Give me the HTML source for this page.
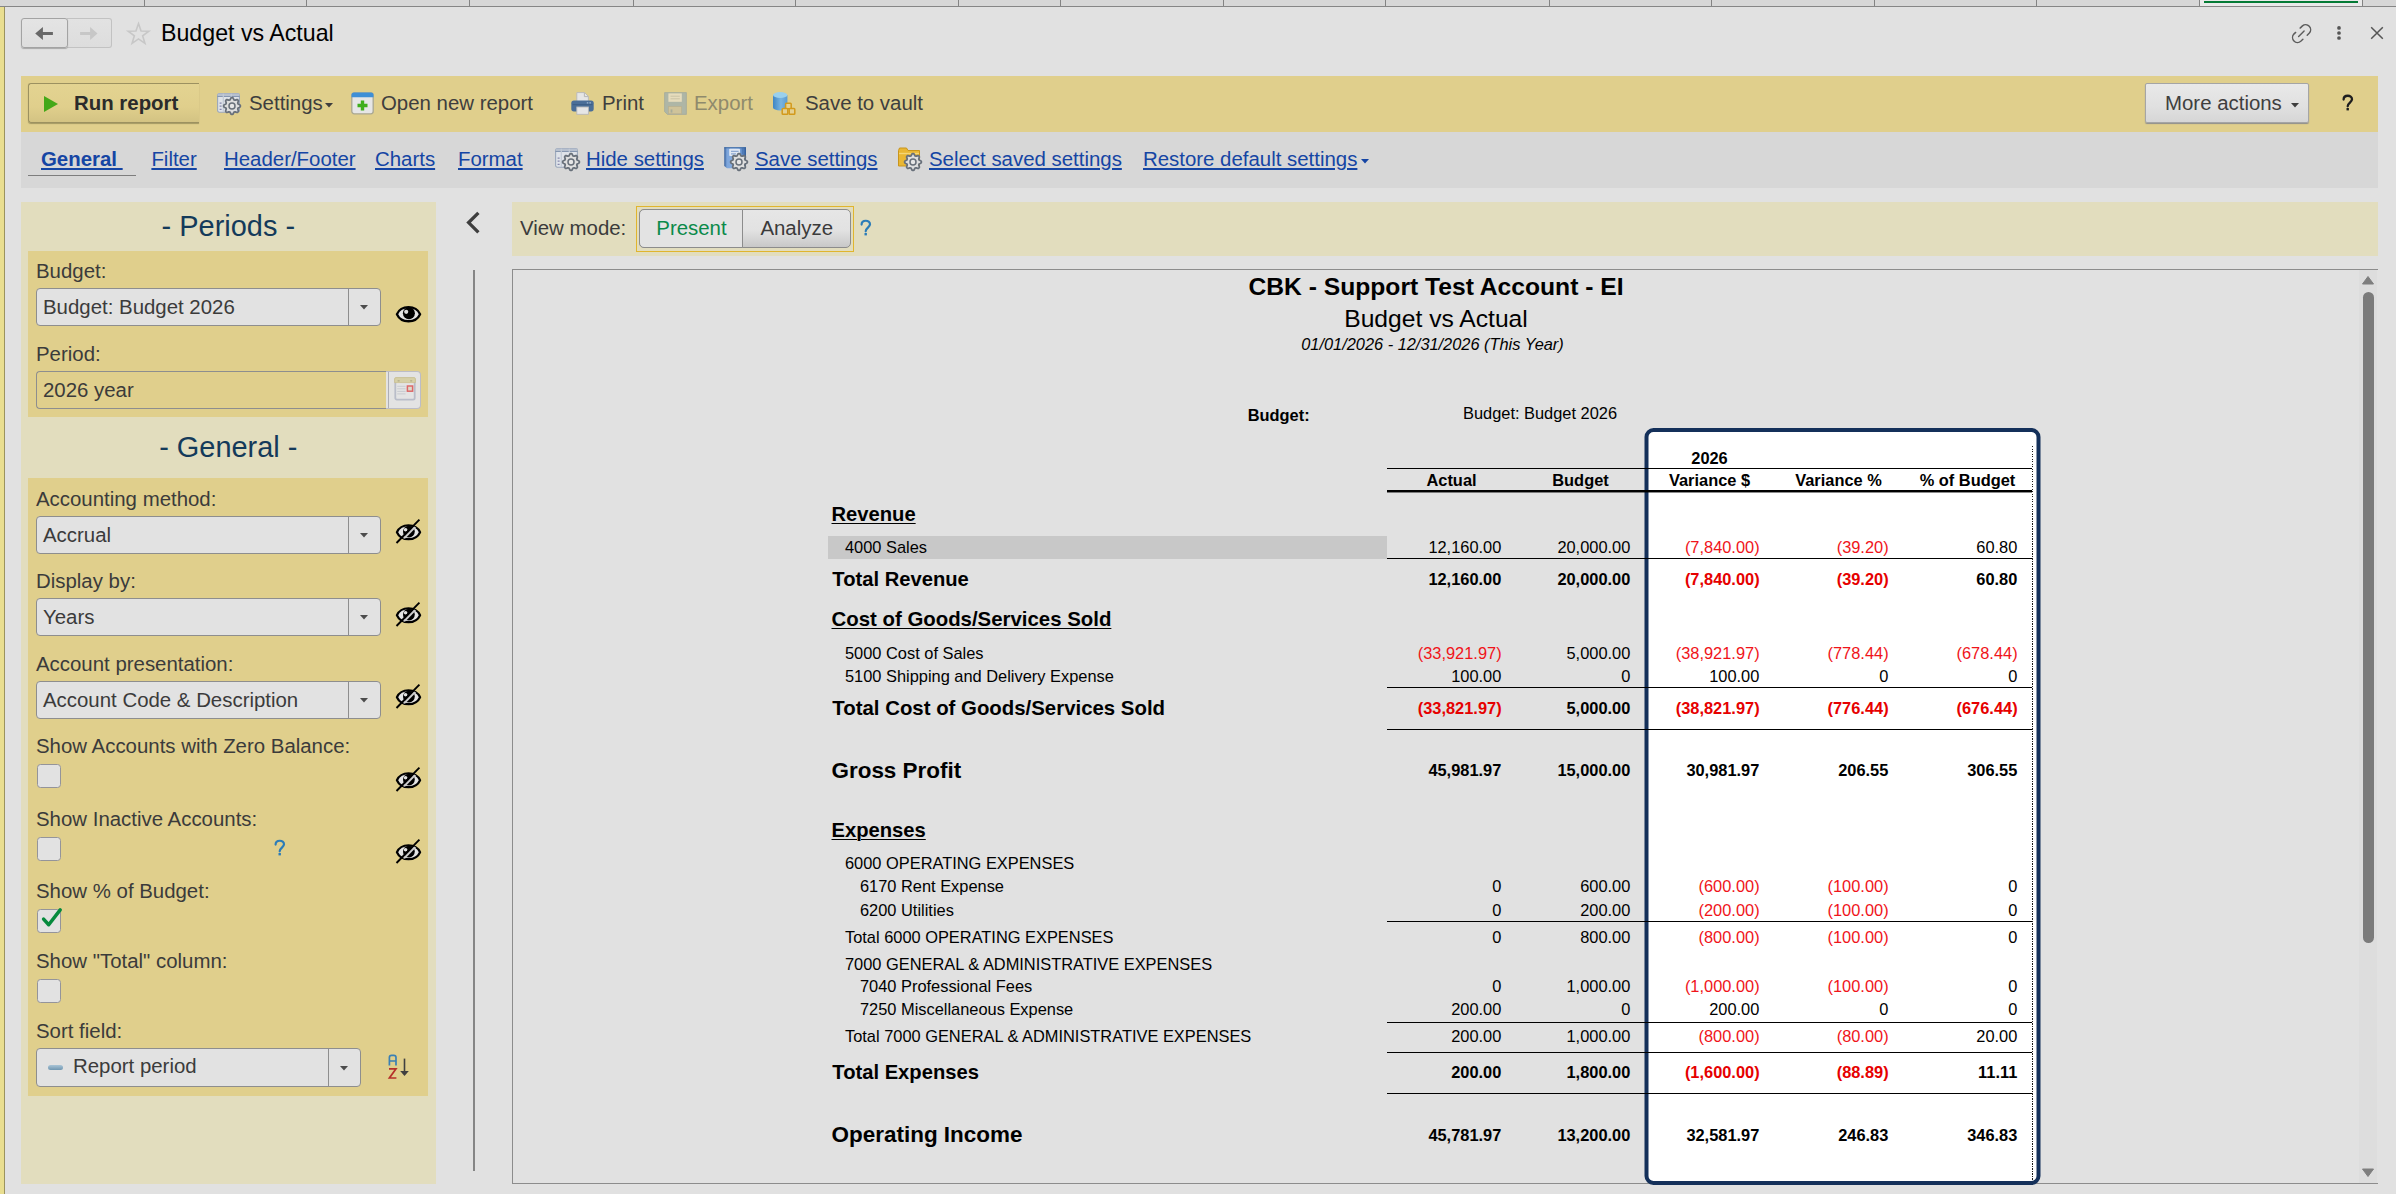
<!DOCTYPE html>
<html><head><meta charset="utf-8"><title>Budget vs Actual</title><style>
html,body{margin:0;padding:0;}
body{width:2396px;height:1194px;overflow:hidden;background:#e1e1e1;font-family:"Liberation Sans",sans-serif;position:relative;}
.r{position:absolute;box-sizing:border-box;}
.t{position:absolute;white-space:nowrap;}
svg{overflow:visible;}
</style></head><body>
<div class="r" style="left:0px;top:0px;width:2396px;height:6px;background:#d7d7d7;"></div>
<div class="r" style="left:2200px;top:0px;width:162px;height:6px;background:#e9e9e9;"></div>
<div class="r" style="left:0px;top:6px;width:2396px;height:1px;background:#868686;"></div>
<div class="r" style="left:144px;top:0px;width:1px;height:6px;background:#838383;"></div>
<div class="r" style="left:306px;top:0px;width:1px;height:6px;background:#838383;"></div>
<div class="r" style="left:469px;top:0px;width:1px;height:6px;background:#838383;"></div>
<div class="r" style="left:633px;top:0px;width:1px;height:6px;background:#838383;"></div>
<div class="r" style="left:795px;top:0px;width:1px;height:6px;background:#838383;"></div>
<div class="r" style="left:958px;top:0px;width:1px;height:6px;background:#838383;"></div>
<div class="r" style="left:1060px;top:0px;width:1px;height:6px;background:#838383;"></div>
<div class="r" style="left:1223px;top:0px;width:1px;height:6px;background:#838383;"></div>
<div class="r" style="left:1385px;top:0px;width:1px;height:6px;background:#838383;"></div>
<div class="r" style="left:1549px;top:0px;width:1px;height:6px;background:#838383;"></div>
<div class="r" style="left:1711px;top:0px;width:1px;height:6px;background:#838383;"></div>
<div class="r" style="left:1874px;top:0px;width:1px;height:6px;background:#838383;"></div>
<div class="r" style="left:2036px;top:0px;width:1px;height:6px;background:#838383;"></div>
<div class="r" style="left:2199px;top:0px;width:1px;height:6px;background:#838383;"></div>
<div class="r" style="left:2362px;top:0px;width:1px;height:6px;background:#838383;"></div>
<div class="r" style="left:2204px;top:1px;width:154px;height:2px;background:#047a35;"></div>
<div class="r" style="left:0px;top:7px;width:4px;height:1187px;background:#e9de90;"></div>
<div class="r" style="left:4px;top:7px;width:1px;height:1187px;background:#9b935e;"></div>
<div class="r" style="left:67px;top:18px;width:45px;height:30px;border:1px solid #c2c2c2;border-left:none;border-radius:0 3px 3px 0;background:linear-gradient(#e2e2e2,#dddddd);"></div>
<div class="r" style="left:21px;top:18px;width:47px;height:30px;border:1px solid #a3a3a3;border-radius:3px;background:linear-gradient(#e4e4e4,#dedede);box-shadow:0 1px 1px #a8a8a8;"></div>
<svg class="r" style="left:35px;top:26px;" width="19" height="15" viewBox="0 0 19 15"><path d="M0.2 7.5 L7.9 0.9 L7.9 6 L17.9 6 L17.9 9 L7.9 9 L7.9 14.1 Z" fill="#686868"/></svg>
<svg class="r" style="left:80px;top:26px;" width="19" height="15" viewBox="0 0 19 15"><path d="M17.5 7.5 L10.1 0.9 L10.1 6 L0.1 6 L0.1 9 L10.1 9 L10.1 14.1 Z" fill="#c7c7c7"/></svg>
<svg class="r" style="left:120px;top:15px;" width="40" height="40" viewBox="0 0 40 40"><path d="M18.50 8.60 L21.06 15.97 L28.87 16.13 L22.65 20.85 L24.91 28.32 L18.50 23.86 L12.09 28.32 L14.35 20.85 L8.13 16.13 L15.94 15.97Z" fill="none" stroke="#c7c7c7" stroke-width="1.6" stroke-linejoin="miter"/></svg>
<div class="t " style="top:19px;font-size:23.2px;line-height:28px;height:28px;color:#000;left:161px;">Budget vs Actual</div>
<svg class="r" style="left:2291.8px;top:23.9px;" width="20" height="20" viewBox="0 0 20 20"><g fill="none" stroke="#5c5c5c" stroke-width="1.45" stroke-linecap="round"><path d="M8.14 4.1 L10.45 1.9 A5 5 0 0 1 17.35 9.1 L15.2 11.2"/><path d="M3.66 8.4 L1.85 10.1 A5 5 0 0 0 8.75 17.3 L10.9 15.2"/><path d="M6.6 12.4 L12.1 7.1"/></g></svg>
<svg class="r" style="left:2336px;top:25px;" width="6" height="16" viewBox="0 0 6 16"><circle cx="3" cy="2.9" r="1.85" fill="#555"/><circle cx="3" cy="8" r="1.85" fill="#555"/><circle cx="3" cy="13" r="1.85" fill="#555"/></svg>
<svg class="r" style="left:2370px;top:26px;" width="14" height="14" viewBox="0 0 14 14"><path d="M1.2 1.2 L12.8 12.8 M12.8 1.2 L1.2 12.8" stroke="#555" stroke-width="1.5" fill="none"/></svg>
<div class="r" style="left:21px;top:76px;width:2357px;height:56px;background:#e0cf8c;"></div>
<div class="r" style="left:28px;top:83px;width:171px;height:40px;border:1px solid #9c9160;border-right:none;border-radius:3px 0 0 3px;background:linear-gradient(#e3d391,#e0cf8c 60%,#d3c383);box-shadow:0 1px 1px #a39863;"></div>
<svg class="r" style="left:44px;top:96px;" width="15" height="16" viewBox="0 0 15 16"><path d="M0 0 L14 8 L0 16 Z" fill="#44a818"/></svg>
<div class="t " style="top:91px;font-size:20.42px;line-height:24px;height:24px;color:#2b2b2b;font-weight:bold;left:74px;">Run report</div>
<div class="t " style="top:91px;font-size:20.42px;line-height:24px;height:24px;color:#3e3e3e;left:249px;">Settings</div>
<svg class="r" style="left:324.6px;top:103px;" width="8" height="5" viewBox="0 0 8 5"><path d="M0 0 L8 0 L4 4.5 Z" fill="#3e3e3e"/></svg>
<div class="t " style="top:91px;font-size:20.42px;line-height:24px;height:24px;color:#3e3e3e;left:381px;">Open new report</div>
<div class="t " style="top:91px;font-size:20.42px;line-height:24px;height:24px;color:#3e3e3e;left:602px;">Print</div>
<div class="t " style="top:91px;font-size:20.42px;line-height:24px;height:24px;color:#8f8a6c;left:694px;">Export</div>
<div class="t " style="top:91px;font-size:20.42px;line-height:24px;height:24px;color:#3e3e3e;left:805px;">Save to vault</div>
<div class="r" style="left:2145px;top:83px;width:164px;height:40px;border:1px solid #a5a5a5;border-radius:2px;background:linear-gradient(#e9e9e9,#e0e0e0 60%,#d6d6d6);box-shadow:0 1px 1px #8e8e8e;"></div>
<div class="t " style="top:91px;font-size:20.42px;line-height:24px;height:24px;color:#3e3e3e;left:2165px;">More actions</div>
<svg class="r" style="left:2291px;top:103px;" width="8" height="5" viewBox="0 0 8 5"><path d="M0 0 L8 0 L4 4.5 Z" fill="#3e3e3e"/></svg>
<svg class="r" style="left:2342px;top:94px;" width="12" height="17" viewBox="0 0 12 17"><path d="M1.6 5.6 C1.6 0.5 10 0.5 10 5.3 C10 8.3 5.7 9 5.7 12.3" fill="none" stroke="#1e1e1e" stroke-width="2.3" stroke-linecap="round"/><rect x="4.5" y="14" width="2.4" height="2.4" fill="#1e1e1e"/></svg>
<div class="r" style="left:21px;top:132px;width:2357px;height:56px;background:#d7d7d7;"></div>
<div class="t " style="top:147px;font-size:20.42px;line-height:24px;height:24px;color:#1545a4;font-weight:bold;text-decoration:underline;left:41px;white-space:pre;">General </div>
<div class="r" style="left:28px;top:175px;width:108px;height:1px;background:#7d7d7d;"></div>
<div class="t " style="top:147px;font-size:20.42px;line-height:24px;height:24px;color:#1545a4;text-decoration:underline;left:151.4px;">Filter</div>
<div class="t " style="top:147px;font-size:20.42px;line-height:24px;height:24px;color:#1545a4;text-decoration:underline;left:224px;">Header/Footer</div>
<div class="t " style="top:147px;font-size:20.42px;line-height:24px;height:24px;color:#1545a4;text-decoration:underline;left:375px;">Charts</div>
<div class="t " style="top:147px;font-size:20.42px;line-height:24px;height:24px;color:#1545a4;text-decoration:underline;left:458px;">Format</div>
<div class="t " style="top:147px;font-size:20.42px;line-height:24px;height:24px;color:#1545a4;text-decoration:underline;left:586px;">Hide settings</div>
<div class="t " style="top:147px;font-size:20.42px;line-height:24px;height:24px;color:#1545a4;text-decoration:underline;left:755px;">Save settings</div>
<div class="t " style="top:147px;font-size:20.42px;line-height:24px;height:24px;color:#1545a4;text-decoration:underline;left:929px;">Select saved settings</div>
<div class="t " style="top:147px;font-size:20.42px;line-height:24px;height:24px;color:#1545a4;text-decoration:underline;left:1143px;">Restore default settings</div>
<svg class="r" style="left:1361px;top:159px;" width="8" height="5" viewBox="0 0 8 5"><path d="M0 0 L8 0 L4 4.5 Z" fill="#1545a4"/></svg>
<div class="r" style="left:21px;top:202px;width:415px;height:982px;background:#e2ddbe;"></div>
<div class="t " style="top:209px;font-size:28.95px;line-height:34px;height:34px;color:#143a5a;left:28.30000000000001px;width:400px;text-align:center;">- Periods -</div>
<div class="r" style="left:28px;top:251px;width:400px;height:166px;background:#e0cf8c;"></div>
<div class="t " style="top:259px;font-size:20.42px;line-height:24px;height:24px;color:#3b3b3b;left:36px;">Budget:</div>
<div class="r" style="left:36px;top:288px;width:345px;height:38px;border:1px solid #8e8e8e;border-radius:4px;background:#e2e2e2;"></div>
<div class="r" style="left:348px;top:289px;width:1px;height:36px;background:#8e8e8e;"></div>
<svg class="r" style="left:360.4px;top:305.0px;" width="8" height="5" viewBox="0 0 8 5"><path d="M0 0 L8 0 L4 4.6 Z" fill="#4c4c4c"/></svg>
<div class="t " style="top:295px;font-size:20.42px;line-height:24px;height:24px;color:#3b3b3b;left:43px;">Budget: Budget 2026</div>
<div class="t " style="top:342px;font-size:20.42px;line-height:24px;height:24px;color:#3b3b3b;left:36px;">Period:</div>
<div class="r" style="left:36px;top:371px;width:351px;height:38px;border:1px solid #8e8e8e;border-right:none;border-radius:4px 0 0 4px;background:#e0cf8c;"></div>
<div class="r" style="left:386px;top:371px;width:35px;height:38px;border:1px solid #bcbcc6;border-left:none;border-radius:0 4px 4px 0;background:#e3e3e3;"></div>
<div class="r" style="left:388px;top:372px;width:1px;height:36px;background:#aeaeb6;"></div>
<div class="t " style="top:378px;font-size:20.42px;line-height:24px;height:24px;color:#3b3b3b;left:43px;">2026 year</div>
<div class="t " style="top:430px;font-size:28.95px;line-height:34px;height:34px;color:#143a5a;left:28.30000000000001px;width:400px;text-align:center;">- General -</div>
<div class="r" style="left:28px;top:478px;width:400px;height:618px;background:#e0cf8c;"></div>
<div class="t " style="top:487px;font-size:20.42px;line-height:24px;height:24px;color:#3b3b3b;left:36px;">Accounting method:</div>
<div class="r" style="left:36px;top:516px;width:345px;height:38px;border:1px solid #8e8e8e;border-radius:4px;background:#e2e2e2;"></div>
<div class="r" style="left:348px;top:517px;width:1px;height:36px;background:#8e8e8e;"></div>
<svg class="r" style="left:360.4px;top:533.0px;" width="8" height="5" viewBox="0 0 8 5"><path d="M0 0 L8 0 L4 4.6 Z" fill="#4c4c4c"/></svg>
<div class="t " style="top:523px;font-size:20.42px;line-height:24px;height:24px;color:#3b3b3b;left:43px;">Accrual</div>
<div class="t " style="top:569px;font-size:20.42px;line-height:24px;height:24px;color:#3b3b3b;left:36px;">Display by:</div>
<div class="r" style="left:36px;top:598px;width:345px;height:38px;border:1px solid #8e8e8e;border-radius:4px;background:#e2e2e2;"></div>
<div class="r" style="left:348px;top:599px;width:1px;height:36px;background:#8e8e8e;"></div>
<svg class="r" style="left:360.4px;top:615.0px;" width="8" height="5" viewBox="0 0 8 5"><path d="M0 0 L8 0 L4 4.6 Z" fill="#4c4c4c"/></svg>
<div class="t " style="top:605px;font-size:20.42px;line-height:24px;height:24px;color:#3b3b3b;left:43px;">Years</div>
<div class="t " style="top:652px;font-size:20.42px;line-height:24px;height:24px;color:#3b3b3b;left:36px;">Account presentation:</div>
<div class="r" style="left:36px;top:681px;width:345px;height:38px;border:1px solid #8e8e8e;border-radius:4px;background:#e2e2e2;"></div>
<div class="r" style="left:348px;top:682px;width:1px;height:36px;background:#8e8e8e;"></div>
<svg class="r" style="left:360.4px;top:698.0px;" width="8" height="5" viewBox="0 0 8 5"><path d="M0 0 L8 0 L4 4.6 Z" fill="#4c4c4c"/></svg>
<div class="t " style="top:688px;font-size:20.42px;line-height:24px;height:24px;color:#3b3b3b;left:43px;">Account Code &amp; Description</div>
<div class="t " style="top:734px;font-size:20.42px;line-height:24px;height:24px;color:#3b3b3b;left:36px;">Show Accounts with Zero Balance:</div>
<div class="r" style="left:37px;top:764px;width:24px;height:24px;border:1px solid #94949a;border-radius:3.5px;background:#e2e2e2;"></div>
<div class="t " style="top:807px;font-size:20.42px;line-height:24px;height:24px;color:#3b3b3b;left:36px;">Show Inactive Accounts:</div>
<div class="r" style="left:37px;top:837px;width:24px;height:24px;border:1px solid #94949a;border-radius:3.5px;background:#e2e2e2;"></div>
<svg class="r" style="left:273.5px;top:838.9px;" width="12" height="17" viewBox="0 0 12 17"><path d="M1.6 5.6 C1.6 0.5 10 0.5 10 5.3 C10 8.3 5.7 9 5.7 12.3" fill="none" stroke="#2b7cb8" stroke-width="2.2" stroke-linecap="round"/><rect x="4.5" y="14" width="2.4" height="2.4" fill="#2b7cb8"/></svg>
<div class="t " style="top:879px;font-size:20.42px;line-height:24px;height:24px;color:#3b3b3b;left:36px;">Show % of Budget:</div>
<div class="r" style="left:37px;top:909px;width:24px;height:24px;border:1px solid #94949a;border-radius:3.5px;background:#e2e2e2;"></div>
<svg class="r" style="left:40px;top:906px;" width="24" height="24" viewBox="0 0 24 24"><path d="M3.6 13.1 L8.7 18.7 L20.2 3.9" fill="none" stroke="#068a3d" stroke-width="3.5" stroke-linecap="round" stroke-linejoin="round"/></svg>
<div class="t " style="top:949px;font-size:20.42px;line-height:24px;height:24px;color:#3b3b3b;left:36px;">Show &quot;Total&quot; column:</div>
<div class="r" style="left:37px;top:979px;width:24px;height:24px;border:1px solid #94949a;border-radius:3.5px;background:#e2e2e2;"></div>
<div class="t " style="top:1019px;font-size:20.42px;line-height:24px;height:24px;color:#3b3b3b;left:36px;">Sort field:</div>
<div class="r" style="left:36px;top:1048px;width:325px;height:39px;border:1px solid #8e8e8e;border-radius:4px;background:#e2e2e2;"></div>
<div class="r" style="left:328px;top:1049px;width:1px;height:37px;background:#8e8e8e;"></div>
<svg class="r" style="left:340.4px;top:1065.5px;" width="8" height="5" viewBox="0 0 8 5"><path d="M0 0 L8 0 L4 4.6 Z" fill="#4c4c4c"/></svg>
<div class="t " style="top:1054px;font-size:20.42px;line-height:24px;height:24px;color:#3b3b3b;left:73px;">Report period</div>
<div class="r" style="left:47.5px;top:1065px;width:15px;height:5px;border-radius:2.5px;background:linear-gradient(#a9c4d6,#7096b0);"></div>
<svg class="r" style="left:465px;top:210px;" width="16" height="26" viewBox="0 0 16 26"><path d="M13.4 2.8 L3.6 12.6 L13.4 22.4" fill="none" stroke="#3e3e3e" stroke-width="3.3"/></svg>
<div class="r" style="left:473px;top:270px;width:2px;height:901px;background:#858585;"></div>
<div class="r" style="left:512px;top:202px;width:1866px;height:54px;background:#e2ddbe;"></div>
<div class="t " style="top:216px;font-size:20.42px;line-height:24px;height:24px;color:#3b3b3b;left:520px;">View mode:</div>
<div class="r" style="left:636px;top:206px;width:218px;height:46px;border:1px solid #e0b52e;"></div>
<div class="r" style="left:639px;top:209px;width:212px;height:39px;border:1px solid #8c8c8c;border-radius:5px;background:linear-gradient(#e6e6e6,#e2e2e2 55%,#c8c8c8);"></div>
<div class="r" style="left:639px;top:209px;width:104px;height:39px;border:1px solid #8c8c8c;border-radius:5px 0 0 5px;background:#e3e3e3;"></div>
<div class="t " style="top:216px;font-size:20.42px;line-height:24px;height:24px;color:#0b8a4a;left:656.3px;">Present</div>
<div class="t " style="top:216px;font-size:20.42px;line-height:24px;height:24px;color:#3b3b3b;left:760.4px;">Analyze</div>
<svg class="r" style="left:859.8px;top:219.4px;" width="12" height="17" viewBox="0 0 12 17"><path d="M1.6 5.6 C1.6 0.5 10 0.5 10 5.3 C10 8.3 5.7 9 5.7 12.3" fill="none" stroke="#2b7cb8" stroke-width="2.2" stroke-linecap="round"/><rect x="4.5" y="14" width="2.4" height="2.4" fill="#2b7cb8"/></svg>
<div class="r" style="left:512px;top:269px;width:1866px;height:915px;border:1px solid #8c8c8c;border-right:none;background:#e1e1e1;"></div>
<div class="r" style="left:2359px;top:270px;width:18px;height:913px;background:#dddddd;"></div>
<svg class="r" style="left:2362px;top:276px;" width="12" height="9" viewBox="0 0 12 9"><path d="M6 0.5 L11.5 8 L0.5 8 Z" fill="#7e7e7e" stroke="#7e7e7e" stroke-width="1" stroke-linejoin="round"/></svg>
<div class="r" style="left:2363px;top:292px;width:11px;height:651px;background:#7b7b7b;border-radius:5.5px;"></div>
<svg class="r" style="left:2362px;top:1168px;" width="12" height="9" viewBox="0 0 12 9"><path d="M6 8.5 L11.5 1 L0.5 1 Z" fill="#7e7e7e" stroke="#7e7e7e" stroke-width="1" stroke-linejoin="round"/></svg>
<div class="r" style="left:1645px;top:428px;width:396px;height:757px;border:4px solid #14305a;border-radius:9px;background:#fff;transform:translateX(-0.5px);"></div>
<div class="r" style="left:2032px;top:446px;width:1px;height:734px;background:repeating-linear-gradient(#1a1a1a 0,#1a1a1a 1.2px,transparent 1.2px,transparent 2.5px);"></div>
<div class="t " style="top:272px;font-size:24.65px;line-height:29px;height:29px;color:#000;font-weight:bold;left:1086.0px;width:700px;text-align:center;">CBK - Support Test Account - EI</div>
<div class="t " style="top:304px;font-size:24.65px;line-height:29px;height:29px;color:#000;left:1086.0px;width:700px;text-align:center;">Budget vs Actual</div>
<div class="t " style="top:334px;font-size:16.38px;line-height:20px;height:20px;color:#000;font-style:italic;left:1082.5px;width:700px;text-align:center;">01/01/2026 - 12/31/2026 (This Year)</div>
<div class="t " style="top:405px;font-size:16.4px;line-height:20px;height:20px;color:#000;font-weight:bold;left:1247.7px;">Budget:</div>
<div class="t " style="top:403px;font-size:16.4px;line-height:20px;height:20px;color:#000;left:1463px;">Budget: Budget 2026</div>
<div class="t " style="top:448px;font-size:16.4px;line-height:20px;height:20px;color:#000;font-weight:bold;left:1609.5px;width:200px;text-align:center;">2026</div>
<div class="r" style="left:1387px;top:468px;width:645px;height:1px;background:#000;"></div>
<div class="r" style="left:1387px;top:490px;width:645px;height:2px;background:#000;"></div>
<div class="r" style="left:1387px;top:492px;width:645px;height:1px;background:rgba(0,0,0,0.45);"></div>
<div class="t " style="top:470px;font-size:16.4px;line-height:20px;height:20px;color:#000;font-weight:bold;left:1387.0px;width:129px;text-align:center;">Actual</div>
<div class="t " style="top:470px;font-size:16.4px;line-height:20px;height:20px;color:#000;font-weight:bold;left:1516.0px;width:129px;text-align:center;">Budget</div>
<div class="t " style="top:470px;font-size:16.4px;line-height:20px;height:20px;color:#000;font-weight:bold;left:1645.0px;width:129px;text-align:center;">Variance $</div>
<div class="t " style="top:470px;font-size:16.4px;line-height:20px;height:20px;color:#000;font-weight:bold;left:1774.0px;width:129px;text-align:center;">Variance %</div>
<div class="t " style="top:470px;font-size:16.4px;line-height:20px;height:20px;color:#000;font-weight:bold;left:1903.0px;width:129px;text-align:center;">% of Budget</div>
<div class="t " style="top:502px;font-size:20.2px;line-height:24px;height:24px;color:#000;font-weight:bold;text-decoration:underline;left:831.5px;text-decoration-thickness:1.4px;text-underline-offset:1.7px;">Revenue</div>
<div class="r" style="left:828px;top:536px;width:559px;height:23px;background:#c8c8c8;"></div>
<div class="t " style="top:537px;font-size:16.4px;line-height:20px;height:20px;color:#000;left:845px;">4000 Sales</div>
<div class="t " style="top:537px;font-size:16.4px;line-height:20px;height:20px;color:#000;right:894.7px;text-align:right;">12,160.00</div>
<div class="t " style="top:537px;font-size:16.4px;line-height:20px;height:20px;color:#000;right:765.7px;text-align:right;">20,000.00</div>
<div class="t " style="top:537px;font-size:16.4px;line-height:20px;height:20px;color:#f0141a;right:636.4000000000001px;text-align:right;">(7,840.00)</div>
<div class="t " style="top:537px;font-size:16.4px;line-height:20px;height:20px;color:#f0141a;right:507.4000000000001px;text-align:right;">(39.20)</div>
<div class="t " style="top:537px;font-size:16.4px;line-height:20px;height:20px;color:#000;right:378.70000000000005px;text-align:right;">60.80</div>
<div class="r" style="left:1387px;top:558px;width:645px;height:1px;background:#000;"></div>
<div class="t " style="top:567px;font-size:20.2px;line-height:24px;height:24px;color:#000;font-weight:bold;left:832.3px;">Total Revenue</div>
<div class="t " style="top:569px;font-size:16.4px;line-height:20px;height:20px;color:#000;font-weight:bold;right:894.7px;text-align:right;">12,160.00</div>
<div class="t " style="top:569px;font-size:16.4px;line-height:20px;height:20px;color:#000;font-weight:bold;right:765.7px;text-align:right;">20,000.00</div>
<div class="t " style="top:569px;font-size:16.4px;line-height:20px;height:20px;color:#e60000;font-weight:bold;right:636.4000000000001px;text-align:right;">(7,840.00)</div>
<div class="t " style="top:569px;font-size:16.4px;line-height:20px;height:20px;color:#e60000;font-weight:bold;right:507.4000000000001px;text-align:right;">(39.20)</div>
<div class="t " style="top:569px;font-size:16.4px;line-height:20px;height:20px;color:#000;font-weight:bold;right:378.70000000000005px;text-align:right;">60.80</div>
<div class="t " style="top:607px;font-size:20.4px;line-height:24px;height:24px;color:#000;font-weight:bold;text-decoration:underline;left:831.5px;text-decoration-thickness:1.4px;text-underline-offset:1.7px;">Cost of Goods/Services Sold</div>
<div class="t " style="top:643px;font-size:16.4px;line-height:20px;height:20px;color:#000;left:845px;">5000 Cost of Sales</div>
<div class="t " style="top:643px;font-size:16.4px;line-height:20px;height:20px;color:#f0141a;right:894.4000000000001px;text-align:right;">(33,921.97)</div>
<div class="t " style="top:643px;font-size:16.4px;line-height:20px;height:20px;color:#000;right:765.7px;text-align:right;">5,000.00</div>
<div class="t " style="top:643px;font-size:16.4px;line-height:20px;height:20px;color:#f0141a;right:636.4000000000001px;text-align:right;">(38,921.97)</div>
<div class="t " style="top:643px;font-size:16.4px;line-height:20px;height:20px;color:#f0141a;right:507.4000000000001px;text-align:right;">(778.44)</div>
<div class="t " style="top:643px;font-size:16.4px;line-height:20px;height:20px;color:#f0141a;right:378.4000000000001px;text-align:right;">(678.44)</div>
<div class="t " style="top:666px;font-size:16.4px;line-height:20px;height:20px;color:#000;left:845px;">5100 Shipping and Delivery Expense</div>
<div class="t " style="top:666px;font-size:16.4px;line-height:20px;height:20px;color:#000;right:894.7px;text-align:right;">100.00</div>
<div class="t " style="top:666px;font-size:16.4px;line-height:20px;height:20px;color:#000;right:765.7px;text-align:right;">0</div>
<div class="t " style="top:666px;font-size:16.4px;line-height:20px;height:20px;color:#000;right:636.7px;text-align:right;">100.00</div>
<div class="t " style="top:666px;font-size:16.4px;line-height:20px;height:20px;color:#000;right:507.70000000000005px;text-align:right;">0</div>
<div class="t " style="top:666px;font-size:16.4px;line-height:20px;height:20px;color:#000;right:378.70000000000005px;text-align:right;">0</div>
<div class="r" style="left:1387px;top:687px;width:645px;height:1px;background:#000;"></div>
<div class="t " style="top:696px;font-size:20.4px;line-height:24px;height:24px;color:#000;font-weight:bold;left:832.3px;">Total Cost of Goods/Services Sold</div>
<div class="t " style="top:698px;font-size:16.4px;line-height:20px;height:20px;color:#e60000;font-weight:bold;right:894.4000000000001px;text-align:right;">(33,821.97)</div>
<div class="t " style="top:698px;font-size:16.4px;line-height:20px;height:20px;color:#000;font-weight:bold;right:765.7px;text-align:right;">5,000.00</div>
<div class="t " style="top:698px;font-size:16.4px;line-height:20px;height:20px;color:#e60000;font-weight:bold;right:636.4000000000001px;text-align:right;">(38,821.97)</div>
<div class="t " style="top:698px;font-size:16.4px;line-height:20px;height:20px;color:#e60000;font-weight:bold;right:507.4000000000001px;text-align:right;">(776.44)</div>
<div class="t " style="top:698px;font-size:16.4px;line-height:20px;height:20px;color:#e60000;font-weight:bold;right:378.4000000000001px;text-align:right;">(676.44)</div>
<div class="r" style="left:1387px;top:729px;width:645px;height:1px;background:#000;"></div>
<div class="t " style="top:757px;font-size:22.45px;line-height:27px;height:27px;color:#000;font-weight:bold;left:831.5px;">Gross Profit</div>
<div class="t " style="top:760px;font-size:16.4px;line-height:20px;height:20px;color:#000;font-weight:bold;right:894.7px;text-align:right;">45,981.97</div>
<div class="t " style="top:760px;font-size:16.4px;line-height:20px;height:20px;color:#000;font-weight:bold;right:765.7px;text-align:right;">15,000.00</div>
<div class="t " style="top:760px;font-size:16.4px;line-height:20px;height:20px;color:#000;font-weight:bold;right:636.7px;text-align:right;">30,981.97</div>
<div class="t " style="top:760px;font-size:16.4px;line-height:20px;height:20px;color:#000;font-weight:bold;right:507.70000000000005px;text-align:right;">206.55</div>
<div class="t " style="top:760px;font-size:16.4px;line-height:20px;height:20px;color:#000;font-weight:bold;right:378.70000000000005px;text-align:right;">306.55</div>
<div class="t " style="top:818px;font-size:20.2px;line-height:24px;height:24px;color:#000;font-weight:bold;text-decoration:underline;left:831.5px;text-decoration-thickness:1.4px;text-underline-offset:1.7px;">Expenses</div>
<div class="t " style="top:853px;font-size:16.4px;line-height:20px;height:20px;color:#000;left:845px;">6000 OPERATING EXPENSES</div>
<div class="t " style="top:876px;font-size:16.4px;line-height:20px;height:20px;color:#000;left:860px;">6170 Rent Expense</div>
<div class="t " style="top:876px;font-size:16.4px;line-height:20px;height:20px;color:#000;right:894.7px;text-align:right;">0</div>
<div class="t " style="top:876px;font-size:16.4px;line-height:20px;height:20px;color:#000;right:765.7px;text-align:right;">600.00</div>
<div class="t " style="top:876px;font-size:16.4px;line-height:20px;height:20px;color:#f0141a;right:636.4000000000001px;text-align:right;">(600.00)</div>
<div class="t " style="top:876px;font-size:16.4px;line-height:20px;height:20px;color:#f0141a;right:507.4000000000001px;text-align:right;">(100.00)</div>
<div class="t " style="top:876px;font-size:16.4px;line-height:20px;height:20px;color:#000;right:378.70000000000005px;text-align:right;">0</div>
<div class="t " style="top:900px;font-size:16.4px;line-height:20px;height:20px;color:#000;left:860px;">6200 Utilities</div>
<div class="t " style="top:900px;font-size:16.4px;line-height:20px;height:20px;color:#000;right:894.7px;text-align:right;">0</div>
<div class="t " style="top:900px;font-size:16.4px;line-height:20px;height:20px;color:#000;right:765.7px;text-align:right;">200.00</div>
<div class="t " style="top:900px;font-size:16.4px;line-height:20px;height:20px;color:#f0141a;right:636.4000000000001px;text-align:right;">(200.00)</div>
<div class="t " style="top:900px;font-size:16.4px;line-height:20px;height:20px;color:#f0141a;right:507.4000000000001px;text-align:right;">(100.00)</div>
<div class="t " style="top:900px;font-size:16.4px;line-height:20px;height:20px;color:#000;right:378.70000000000005px;text-align:right;">0</div>
<div class="r" style="left:1387px;top:921px;width:645px;height:1px;background:#000;"></div>
<div class="t " style="top:927px;font-size:16.4px;line-height:20px;height:20px;color:#000;left:845px;">Total 6000 OPERATING EXPENSES</div>
<div class="t " style="top:927px;font-size:16.4px;line-height:20px;height:20px;color:#000;right:894.7px;text-align:right;">0</div>
<div class="t " style="top:927px;font-size:16.4px;line-height:20px;height:20px;color:#000;right:765.7px;text-align:right;">800.00</div>
<div class="t " style="top:927px;font-size:16.4px;line-height:20px;height:20px;color:#f0141a;right:636.4000000000001px;text-align:right;">(800.00)</div>
<div class="t " style="top:927px;font-size:16.4px;line-height:20px;height:20px;color:#f0141a;right:507.4000000000001px;text-align:right;">(100.00)</div>
<div class="t " style="top:927px;font-size:16.4px;line-height:20px;height:20px;color:#000;right:378.70000000000005px;text-align:right;">0</div>
<div class="t " style="top:954px;font-size:16.4px;line-height:20px;height:20px;color:#000;left:845px;">7000 GENERAL &amp; ADMINISTRATIVE EXPENSES</div>
<div class="t " style="top:976px;font-size:16.4px;line-height:20px;height:20px;color:#000;left:860px;">7040 Professional Fees</div>
<div class="t " style="top:976px;font-size:16.4px;line-height:20px;height:20px;color:#000;right:894.7px;text-align:right;">0</div>
<div class="t " style="top:976px;font-size:16.4px;line-height:20px;height:20px;color:#000;right:765.7px;text-align:right;">1,000.00</div>
<div class="t " style="top:976px;font-size:16.4px;line-height:20px;height:20px;color:#f0141a;right:636.4000000000001px;text-align:right;">(1,000.00)</div>
<div class="t " style="top:976px;font-size:16.4px;line-height:20px;height:20px;color:#f0141a;right:507.4000000000001px;text-align:right;">(100.00)</div>
<div class="t " style="top:976px;font-size:16.4px;line-height:20px;height:20px;color:#000;right:378.70000000000005px;text-align:right;">0</div>
<div class="t " style="top:999px;font-size:16.4px;line-height:20px;height:20px;color:#000;left:860px;">7250 Miscellaneous Expense</div>
<div class="t " style="top:999px;font-size:16.4px;line-height:20px;height:20px;color:#000;right:894.7px;text-align:right;">200.00</div>
<div class="t " style="top:999px;font-size:16.4px;line-height:20px;height:20px;color:#000;right:765.7px;text-align:right;">0</div>
<div class="t " style="top:999px;font-size:16.4px;line-height:20px;height:20px;color:#000;right:636.7px;text-align:right;">200.00</div>
<div class="t " style="top:999px;font-size:16.4px;line-height:20px;height:20px;color:#000;right:507.70000000000005px;text-align:right;">0</div>
<div class="t " style="top:999px;font-size:16.4px;line-height:20px;height:20px;color:#000;right:378.70000000000005px;text-align:right;">0</div>
<div class="r" style="left:1387px;top:1022px;width:645px;height:1px;background:#000;"></div>
<div class="t " style="top:1026px;font-size:16.4px;line-height:20px;height:20px;color:#000;left:845px;">Total 7000 GENERAL &amp; ADMINISTRATIVE EXPENSES</div>
<div class="t " style="top:1026px;font-size:16.4px;line-height:20px;height:20px;color:#000;right:894.7px;text-align:right;">200.00</div>
<div class="t " style="top:1026px;font-size:16.4px;line-height:20px;height:20px;color:#000;right:765.7px;text-align:right;">1,000.00</div>
<div class="t " style="top:1026px;font-size:16.4px;line-height:20px;height:20px;color:#f0141a;right:636.4000000000001px;text-align:right;">(800.00)</div>
<div class="t " style="top:1026px;font-size:16.4px;line-height:20px;height:20px;color:#f0141a;right:507.4000000000001px;text-align:right;">(80.00)</div>
<div class="t " style="top:1026px;font-size:16.4px;line-height:20px;height:20px;color:#000;right:378.70000000000005px;text-align:right;">20.00</div>
<div class="r" style="left:1387px;top:1052px;width:645px;height:1px;background:#000;"></div>
<div class="t " style="top:1060px;font-size:20.2px;line-height:24px;height:24px;color:#000;font-weight:bold;left:832.3px;">Total Expenses</div>
<div class="t " style="top:1062px;font-size:16.4px;line-height:20px;height:20px;color:#000;font-weight:bold;right:894.7px;text-align:right;">200.00</div>
<div class="t " style="top:1062px;font-size:16.4px;line-height:20px;height:20px;color:#000;font-weight:bold;right:765.7px;text-align:right;">1,800.00</div>
<div class="t " style="top:1062px;font-size:16.4px;line-height:20px;height:20px;color:#e60000;font-weight:bold;right:636.4000000000001px;text-align:right;">(1,600.00)</div>
<div class="t " style="top:1062px;font-size:16.4px;line-height:20px;height:20px;color:#e60000;font-weight:bold;right:507.4000000000001px;text-align:right;">(88.89)</div>
<div class="t " style="top:1062px;font-size:16.4px;line-height:20px;height:20px;color:#000;font-weight:bold;right:378.70000000000005px;text-align:right;">11.11</div>
<div class="r" style="left:1387px;top:1093px;width:645px;height:1px;background:#000;"></div>
<div class="t " style="top:1121px;font-size:22.47px;line-height:27px;height:27px;color:#000;font-weight:bold;left:831.5px;">Operating Income</div>
<div class="t " style="top:1125px;font-size:16.4px;line-height:20px;height:20px;color:#000;font-weight:bold;right:894.7px;text-align:right;">45,781.97</div>
<div class="t " style="top:1125px;font-size:16.4px;line-height:20px;height:20px;color:#000;font-weight:bold;right:765.7px;text-align:right;">13,200.00</div>
<div class="t " style="top:1125px;font-size:16.4px;line-height:20px;height:20px;color:#000;font-weight:bold;right:636.7px;text-align:right;">32,581.97</div>
<div class="t " style="top:1125px;font-size:16.4px;line-height:20px;height:20px;color:#000;font-weight:bold;right:507.70000000000005px;text-align:right;">246.83</div>
<div class="t " style="top:1125px;font-size:16.4px;line-height:20px;height:20px;color:#000;font-weight:bold;right:378.70000000000005px;text-align:right;">346.83</div>
<svg class="r" style="left:217px;top:92.5px;" width="23" height="20" viewBox="0 0 23 20"><rect x="0.6" y="0.6" width="21.8" height="18.6" rx="1.6" fill="#dfe3e9" stroke="#9aa7ba" stroke-width="1.1"/><rect x="0.6" y="0.6" width="21.8" height="2.6" rx="1.3" fill="#b7c0ce"/><path d="M0.6 3.5 H22.4" stroke="#7285a3" stroke-width="0.8"/><path d="M6.3 0.8 V19 M14.3 0.8 V4.5" stroke="#c3cad6" stroke-width="1.2"/><path d="M2.6 10.2 H4.6 M2.6 13.2 H4.6 M2.6 16.4 H4.6" stroke="#8688ac" stroke-width="1.3"/></svg>
<svg class="r" style="left:219.89999999999998px;top:93.9px;" width="24" height="24" viewBox="0 0 24 24"><path d="M12.00 3.65 L12.55 3.67 L13.05 4.03 L13.44 4.74 L13.75 5.47 L14.07 5.89 L14.47 6.04 L14.85 6.22 L15.38 6.15 L16.11 5.85 L16.90 5.62 L17.51 5.72 L17.90 6.10 L18.28 6.49 L18.38 7.10 L18.15 7.89 L17.85 8.62 L17.78 9.15 L17.96 9.53 L18.11 9.93 L18.53 10.25 L19.26 10.56 L19.97 10.95 L20.33 11.45 L20.35 12.00 L20.33 12.55 L19.97 13.05 L19.26 13.44 L18.53 13.75 L18.11 14.07 L17.96 14.47 L17.78 14.85 L17.85 15.38 L18.15 16.11 L18.38 16.90 L18.28 17.51 L17.90 17.90 L17.51 18.28 L16.90 18.38 L16.11 18.15 L15.38 17.85 L14.85 17.78 L14.47 17.96 L14.07 18.11 L13.75 18.53 L13.44 19.26 L13.05 19.97 L12.55 20.33 L12.00 20.35 L11.45 20.33 L10.95 19.97 L10.56 19.26 L10.25 18.53 L9.93 18.11 L9.53 17.96 L9.15 17.78 L8.62 17.85 L7.89 18.15 L7.10 18.38 L6.49 18.28 L6.10 17.90 L5.72 17.51 L5.62 16.90 L5.85 16.11 L6.15 15.38 L6.22 14.85 L6.04 14.47 L5.89 14.07 L5.47 13.75 L4.74 13.44 L4.03 13.05 L3.67 12.55 L3.65 12.00 L3.67 11.45 L4.03 10.95 L4.74 10.56 L5.47 10.25 L5.89 9.93 L6.04 9.53 L6.22 9.15 L6.15 8.62 L5.85 7.89 L5.62 7.10 L5.72 6.49 L6.10 6.10 L6.49 5.72 L7.10 5.62 L7.89 5.85 L8.62 6.15 L9.15 6.22 L9.53 6.04 L9.93 5.89 L10.25 5.47 L10.56 4.74 L10.95 4.03 L11.45 3.67Z" fill="#dedede" stroke="#68707a" stroke-width="1.75" stroke-linejoin="round"/><circle cx="12" cy="12" r="3.0" fill="#e6e6e6" stroke="#68707a" stroke-width="1.5"/></svg>
<svg class="r" style="left:351px;top:92px;" width="23" height="23" viewBox="0 0 23 23"><rect x="0.8" y="0.8" width="21.4" height="21" rx="2.5" fill="#e6e6e6" stroke="#a9a792" stroke-width="1.3"/><path d="M0.5 5.3 V3 A2.5 2.5 0 0 1 3 0.5 H20 A2.5 2.5 0 0 1 22.5 3 V5.3 Z" fill="#3e8fd6"/><path d="M11.5 8.5 V18.5 M6.5 13.5 H16.5" stroke="#3fae1c" stroke-width="3.4" fill="none"/></svg>
<svg class="r" style="left:571px;top:92px;" width="23" height="23" viewBox="0 0 23 23"><path d="M5.8 0.6 H13.6 L17.4 4.4 V10 H5.8 Z" fill="#e6e6e6" stroke="#b8b8b8" stroke-width="0.9"/><path d="M13.4 0.8 V4.6 H17.2" fill="none" stroke="#b0b0b0" stroke-width="0.9"/><rect x="0.3" y="8.6" width="22.4" height="10.8" rx="2.6" fill="#4a6e98"/><rect x="1.5" y="12" width="20" height="1.2" fill="#3d5f88"/><rect x="15.8" y="10.2" width="1.5" height="1.3" fill="#9db6d2"/><rect x="18.4" y="10.2" width="1.5" height="1.3" fill="#9db6d2"/><rect x="5.8" y="15" width="11.6" height="7.3" fill="#e6e6e6" stroke="#b8b8b8" stroke-width="0.9"/></svg>
<svg class="r" style="left:664px;top:92px;" width="23" height="23" viewBox="0 0 23 23"><path d="M0.6 0.6 H22.4 V22.4 H3.4 L0.6 19.6 Z" fill="#aeb6a6" stroke="#a4ab9a" stroke-width="0.8"/><rect x="4.4" y="1.4" width="13.4" height="8.4" fill="#e6dcbc"/><path d="M6.5 4.2 H15.8 M6.5 6.8 H15.8" stroke="#c9c2a4" stroke-width="1"/><rect x="4.6" y="14.6" width="13" height="7.2" fill="#cfc39a" stroke="#b9b08e" stroke-width="0.7"/><rect x="6.6" y="17.4" width="1.8" height="3.2" fill="#a8ac9a"/></svg>
<svg class="r" style="left:772px;top:91px;" width="26" height="25" viewBox="0 0 26 25"><defs><linearGradient id="cyl" x1="0" x2="1" y1="0" y2="0"><stop offset="0" stop-color="#3f86c4"/><stop offset="0.55" stop-color="#78b4e0"/><stop offset="1" stop-color="#5a9bd2"/></linearGradient></defs><path d="M1 4 V16.5 A7.2 3 0 0 0 15.4 16.5 V4 Z" fill="url(#cyl)"/><ellipse cx="8.2" cy="4" rx="7.2" ry="3" fill="#9ad0ec"/><g fill="#e5d192" stroke="#d29a1c" stroke-width="1.5"><rect x="13.6" y="12.2" width="5.6" height="5.6" rx="0.8"/><rect x="10.2" y="17.6" width="5.6" height="5.6" rx="0.8"/><rect x="17.2" y="17.6" width="5.6" height="5.6" rx="0.8"/></g></svg>
<svg class="r" style="left:555px;top:148px;" width="23" height="20" viewBox="0 0 23 20"><rect x="0.6" y="0.6" width="21.8" height="18.6" rx="1.6" fill="#dfe3e9" stroke="#9aa7ba" stroke-width="1.1"/><rect x="0.6" y="0.6" width="21.8" height="2.6" rx="1.3" fill="#b7c0ce"/><path d="M0.6 3.5 H22.4" stroke="#7285a3" stroke-width="0.8"/><path d="M6.3 0.8 V19 M14.3 0.8 V4.5" stroke="#c3cad6" stroke-width="1.2"/><path d="M2.6 10.2 H4.6 M2.6 13.2 H4.6 M2.6 16.4 H4.6" stroke="#8688ac" stroke-width="1.3"/></svg>
<svg class="r" style="left:558.6px;top:150.2px;" width="24" height="24" viewBox="0 0 24 24"><path d="M12.00 3.65 L12.55 3.67 L13.05 4.03 L13.44 4.74 L13.75 5.47 L14.07 5.89 L14.47 6.04 L14.85 6.22 L15.38 6.15 L16.11 5.85 L16.90 5.62 L17.51 5.72 L17.90 6.10 L18.28 6.49 L18.38 7.10 L18.15 7.89 L17.85 8.62 L17.78 9.15 L17.96 9.53 L18.11 9.93 L18.53 10.25 L19.26 10.56 L19.97 10.95 L20.33 11.45 L20.35 12.00 L20.33 12.55 L19.97 13.05 L19.26 13.44 L18.53 13.75 L18.11 14.07 L17.96 14.47 L17.78 14.85 L17.85 15.38 L18.15 16.11 L18.38 16.90 L18.28 17.51 L17.90 17.90 L17.51 18.28 L16.90 18.38 L16.11 18.15 L15.38 17.85 L14.85 17.78 L14.47 17.96 L14.07 18.11 L13.75 18.53 L13.44 19.26 L13.05 19.97 L12.55 20.33 L12.00 20.35 L11.45 20.33 L10.95 19.97 L10.56 19.26 L10.25 18.53 L9.93 18.11 L9.53 17.96 L9.15 17.78 L8.62 17.85 L7.89 18.15 L7.10 18.38 L6.49 18.28 L6.10 17.90 L5.72 17.51 L5.62 16.90 L5.85 16.11 L6.15 15.38 L6.22 14.85 L6.04 14.47 L5.89 14.07 L5.47 13.75 L4.74 13.44 L4.03 13.05 L3.67 12.55 L3.65 12.00 L3.67 11.45 L4.03 10.95 L4.74 10.56 L5.47 10.25 L5.89 9.93 L6.04 9.53 L6.22 9.15 L6.15 8.62 L5.85 7.89 L5.62 7.10 L5.72 6.49 L6.10 6.10 L6.49 5.72 L7.10 5.62 L7.89 5.85 L8.62 6.15 L9.15 6.22 L9.53 6.04 L9.93 5.89 L10.25 5.47 L10.56 4.74 L10.95 4.03 L11.45 3.67Z" fill="#dedede" stroke="#68707a" stroke-width="1.75" stroke-linejoin="round"/><circle cx="12" cy="12" r="3.0" fill="#e6e6e6" stroke="#68707a" stroke-width="1.5"/></svg>
<svg class="r" style="left:724px;top:147px;" width="22" height="22" viewBox="0 0 22 22"><defs><linearGradient id="flp" x1="0" x2="1" y1="0" y2="0"><stop offset="0" stop-color="#2f5a98"/><stop offset="0.12" stop-color="#7ea6db"/><stop offset="0.45" stop-color="#86ace0"/><stop offset="0.8" stop-color="#6f9ad4"/><stop offset="1" stop-color="#2f5a98"/></linearGradient></defs><path d="M0.3 0.3 H22 V21.3 H3 L0.3 19 Z" fill="url(#flp)"/><path d="M0.3 0.8 H22" stroke="#3a659f" stroke-width="1"/><rect x="5.2" y="1.8" width="10.8" height="7.2" rx="0.8" fill="#dfe7f3"/><path d="M7 4.3 H14.6 M7 6.9 H12" stroke="#8ea9d2" stroke-width="1.3"/><rect x="17.6" y="1.2" width="1.6" height="6" fill="#3e67a6" opacity="0.5"/></svg>
<svg class="r" style="left:727.2px;top:150.2px;" width="24" height="24" viewBox="0 0 24 24"><path d="M12.00 3.65 L12.55 3.67 L13.05 4.03 L13.44 4.74 L13.75 5.47 L14.07 5.89 L14.47 6.04 L14.85 6.22 L15.38 6.15 L16.11 5.85 L16.90 5.62 L17.51 5.72 L17.90 6.10 L18.28 6.49 L18.38 7.10 L18.15 7.89 L17.85 8.62 L17.78 9.15 L17.96 9.53 L18.11 9.93 L18.53 10.25 L19.26 10.56 L19.97 10.95 L20.33 11.45 L20.35 12.00 L20.33 12.55 L19.97 13.05 L19.26 13.44 L18.53 13.75 L18.11 14.07 L17.96 14.47 L17.78 14.85 L17.85 15.38 L18.15 16.11 L18.38 16.90 L18.28 17.51 L17.90 17.90 L17.51 18.28 L16.90 18.38 L16.11 18.15 L15.38 17.85 L14.85 17.78 L14.47 17.96 L14.07 18.11 L13.75 18.53 L13.44 19.26 L13.05 19.97 L12.55 20.33 L12.00 20.35 L11.45 20.33 L10.95 19.97 L10.56 19.26 L10.25 18.53 L9.93 18.11 L9.53 17.96 L9.15 17.78 L8.62 17.85 L7.89 18.15 L7.10 18.38 L6.49 18.28 L6.10 17.90 L5.72 17.51 L5.62 16.90 L5.85 16.11 L6.15 15.38 L6.22 14.85 L6.04 14.47 L5.89 14.07 L5.47 13.75 L4.74 13.44 L4.03 13.05 L3.67 12.55 L3.65 12.00 L3.67 11.45 L4.03 10.95 L4.74 10.56 L5.47 10.25 L5.89 9.93 L6.04 9.53 L6.22 9.15 L6.15 8.62 L5.85 7.89 L5.62 7.10 L5.72 6.49 L6.10 6.10 L6.49 5.72 L7.10 5.62 L7.89 5.85 L8.62 6.15 L9.15 6.22 L9.53 6.04 L9.93 5.89 L10.25 5.47 L10.56 4.74 L10.95 4.03 L11.45 3.67Z" fill="#dedede" stroke="#68707a" stroke-width="1.75" stroke-linejoin="round"/><circle cx="12" cy="12" r="3.0" fill="#e6e6e6" stroke="#68707a" stroke-width="1.5"/></svg>
<svg class="r" style="left:898px;top:147px;" width="22" height="20" viewBox="0 0 22 20"><path d="M0.5 3.5 L1.5 1 H8.5 L10 3.5 H21.5 V19 H0.5 Z" fill="#e9b734" stroke="#c9951c" stroke-width="1"/><path d="M1 6.5 H21" stroke="#f4d678" stroke-width="1.4"/></svg>
<svg class="r" style="left:901.3000000000001px;top:150.2px;" width="24" height="24" viewBox="0 0 24 24"><path d="M12.00 3.65 L12.55 3.67 L13.05 4.03 L13.44 4.74 L13.75 5.47 L14.07 5.89 L14.47 6.04 L14.85 6.22 L15.38 6.15 L16.11 5.85 L16.90 5.62 L17.51 5.72 L17.90 6.10 L18.28 6.49 L18.38 7.10 L18.15 7.89 L17.85 8.62 L17.78 9.15 L17.96 9.53 L18.11 9.93 L18.53 10.25 L19.26 10.56 L19.97 10.95 L20.33 11.45 L20.35 12.00 L20.33 12.55 L19.97 13.05 L19.26 13.44 L18.53 13.75 L18.11 14.07 L17.96 14.47 L17.78 14.85 L17.85 15.38 L18.15 16.11 L18.38 16.90 L18.28 17.51 L17.90 17.90 L17.51 18.28 L16.90 18.38 L16.11 18.15 L15.38 17.85 L14.85 17.78 L14.47 17.96 L14.07 18.11 L13.75 18.53 L13.44 19.26 L13.05 19.97 L12.55 20.33 L12.00 20.35 L11.45 20.33 L10.95 19.97 L10.56 19.26 L10.25 18.53 L9.93 18.11 L9.53 17.96 L9.15 17.78 L8.62 17.85 L7.89 18.15 L7.10 18.38 L6.49 18.28 L6.10 17.90 L5.72 17.51 L5.62 16.90 L5.85 16.11 L6.15 15.38 L6.22 14.85 L6.04 14.47 L5.89 14.07 L5.47 13.75 L4.74 13.44 L4.03 13.05 L3.67 12.55 L3.65 12.00 L3.67 11.45 L4.03 10.95 L4.74 10.56 L5.47 10.25 L5.89 9.93 L6.04 9.53 L6.22 9.15 L6.15 8.62 L5.85 7.89 L5.62 7.10 L5.72 6.49 L6.10 6.10 L6.49 5.72 L7.10 5.62 L7.89 5.85 L8.62 6.15 L9.15 6.22 L9.53 6.04 L9.93 5.89 L10.25 5.47 L10.56 4.74 L10.95 4.03 L11.45 3.67Z" fill="#dedede" stroke="#68707a" stroke-width="1.75" stroke-linejoin="round"/><circle cx="12" cy="12" r="3.0" fill="#e6e6e6" stroke="#68707a" stroke-width="1.5"/></svg>
<svg class="r" style="left:396.0px;top:306.2px;" width="25" height="17" viewBox="0 0 25 17"><path d="M0.9 8.2 C 5.2 -1.2, 19.8 -1.2, 24.1 8.2 C 19.8 17.6, 5.2 17.6, 0.9 8.2 Z" fill="#e4e4e4" stroke="#000" stroke-width="2.3" stroke-linejoin="round"/><circle cx="12.9" cy="7.3" r="6.0" fill="#000"/><circle cx="10.2" cy="5.8" r="2.1" fill="#dcdcdc"/></svg>
<svg class="r" style="left:396.0px;top:519.0px;" width="25" height="25" viewBox="0 0 25 25"><clipPath id="ec1"><path d="M0.9 13.2 C 5.2 3.9, 19.8 3.9, 24.1 13.2 C 19.8 22.5, 5.2 22.5, 0.9 13.2 Z"/></clipPath><path d="M0.9 13.2 C 5.2 3.9, 19.8 3.9, 24.1 13.2 C 19.8 22.5, 5.2 22.5, 0.9 13.2 Z" fill="#e4e4e4" stroke="#000" stroke-width="2.2" stroke-linejoin="round"/><circle cx="12.9" cy="12.6" r="5.9" fill="#000"/><circle cx="9.6" cy="10.7" r="1.8" fill="#e0e0e0"/><path d="M2.2 25.2 L25.2 1.7" stroke="#cdcdcd" stroke-width="2.1" clip-path="url(#ec1)"/><path d="M0.5 24.0 L23.4 0.6" stroke="#000" stroke-width="1.9" stroke-linecap="butt"/></svg>
<svg class="r" style="left:396.0px;top:601.9px;" width="25" height="25" viewBox="0 0 25 25"><clipPath id="ec2"><path d="M0.9 13.2 C 5.2 3.9, 19.8 3.9, 24.1 13.2 C 19.8 22.5, 5.2 22.5, 0.9 13.2 Z"/></clipPath><path d="M0.9 13.2 C 5.2 3.9, 19.8 3.9, 24.1 13.2 C 19.8 22.5, 5.2 22.5, 0.9 13.2 Z" fill="#e4e4e4" stroke="#000" stroke-width="2.2" stroke-linejoin="round"/><circle cx="12.9" cy="12.6" r="5.9" fill="#000"/><circle cx="9.6" cy="10.7" r="1.8" fill="#e0e0e0"/><path d="M2.2 25.2 L25.2 1.7" stroke="#cdcdcd" stroke-width="2.1" clip-path="url(#ec2)"/><path d="M0.5 24.0 L23.4 0.6" stroke="#000" stroke-width="1.9" stroke-linecap="butt"/></svg>
<svg class="r" style="left:396.0px;top:683.5px;" width="25" height="25" viewBox="0 0 25 25"><clipPath id="ec3"><path d="M0.9 13.2 C 5.2 3.9, 19.8 3.9, 24.1 13.2 C 19.8 22.5, 5.2 22.5, 0.9 13.2 Z"/></clipPath><path d="M0.9 13.2 C 5.2 3.9, 19.8 3.9, 24.1 13.2 C 19.8 22.5, 5.2 22.5, 0.9 13.2 Z" fill="#e4e4e4" stroke="#000" stroke-width="2.2" stroke-linejoin="round"/><circle cx="12.9" cy="12.6" r="5.9" fill="#000"/><circle cx="9.6" cy="10.7" r="1.8" fill="#e0e0e0"/><path d="M2.2 25.2 L25.2 1.7" stroke="#cdcdcd" stroke-width="2.1" clip-path="url(#ec3)"/><path d="M0.5 24.0 L23.4 0.6" stroke="#000" stroke-width="1.9" stroke-linecap="butt"/></svg>
<svg class="r" style="left:396.0px;top:767.0999999999999px;" width="25" height="25" viewBox="0 0 25 25"><clipPath id="ec4"><path d="M0.9 13.2 C 5.2 3.9, 19.8 3.9, 24.1 13.2 C 19.8 22.5, 5.2 22.5, 0.9 13.2 Z"/></clipPath><path d="M0.9 13.2 C 5.2 3.9, 19.8 3.9, 24.1 13.2 C 19.8 22.5, 5.2 22.5, 0.9 13.2 Z" fill="#e4e4e4" stroke="#000" stroke-width="2.2" stroke-linejoin="round"/><circle cx="12.9" cy="12.6" r="5.9" fill="#000"/><circle cx="9.6" cy="10.7" r="1.8" fill="#e0e0e0"/><path d="M2.2 25.2 L25.2 1.7" stroke="#cdcdcd" stroke-width="2.1" clip-path="url(#ec4)"/><path d="M0.5 24.0 L23.4 0.6" stroke="#000" stroke-width="1.9" stroke-linecap="butt"/></svg>
<svg class="r" style="left:396.0px;top:838.9px;" width="25" height="25" viewBox="0 0 25 25"><clipPath id="ec5"><path d="M0.9 13.2 C 5.2 3.9, 19.8 3.9, 24.1 13.2 C 19.8 22.5, 5.2 22.5, 0.9 13.2 Z"/></clipPath><path d="M0.9 13.2 C 5.2 3.9, 19.8 3.9, 24.1 13.2 C 19.8 22.5, 5.2 22.5, 0.9 13.2 Z" fill="#e4e4e4" stroke="#000" stroke-width="2.2" stroke-linejoin="round"/><circle cx="12.9" cy="12.6" r="5.9" fill="#000"/><circle cx="9.6" cy="10.7" r="1.8" fill="#e0e0e0"/><path d="M2.2 25.2 L25.2 1.7" stroke="#cdcdcd" stroke-width="2.1" clip-path="url(#ec5)"/><path d="M0.5 24.0 L23.4 0.6" stroke="#000" stroke-width="1.9" stroke-linecap="butt"/></svg>
<svg class="r" style="left:394px;top:377px;" width="22" height="24" viewBox="0 0 22 24"><rect x="1.3" y="1.3" width="19.4" height="21.4" rx="1.6" fill="#e4e4e4" stroke="#b9bdc9" stroke-width="1.8"/><path d="M0.6 5.6 V2 A1.4 1.4 0 0 1 2 0.6 H20 A1.4 1.4 0 0 1 21.4 2 V5.6 Z" fill="#d6d0a6" stroke="#c9bf8e" stroke-width="0.8"/><rect x="3.6" y="3" width="2" height="1.6" fill="#b9b48f"/><rect x="16.2" y="3" width="2" height="1.6" fill="#b9b48f"/><path d="M3.2 9.3 H11.6 M3.2 11.8 H11.6 M3.2 14.4 H11.6 M3.2 16.9 H11.6" stroke="#c9cbd0" stroke-width="1"/><rect x="13.4" y="9" width="5.2" height="5.2" fill="#dcdccd" stroke="#dc6868" stroke-width="1.5"/></svg>
<svg class="r" style="left:388px;top:1054px;" width="22" height="26" viewBox="0 0 22 26"><path d="M1.4 11.6 V3.6 Q1.4 1.4 3.6 1.4 H5.8 Q8 1.4 8 3.6 V11.6 M1.4 7 H8" fill="none" stroke="#3a80b4" stroke-width="1.7"/><path d="M1 14.8 H8 L1.4 24 H8.4" fill="none" stroke="#b5302a" stroke-width="1.7" stroke-linejoin="miter"/><path d="M16.5 4.6 V18" stroke="#404040" stroke-width="1.6" fill="none"/><path d="M12.2 17 H20.8 L16.5 22 Z" fill="#404040"/></svg>
</body></html>
